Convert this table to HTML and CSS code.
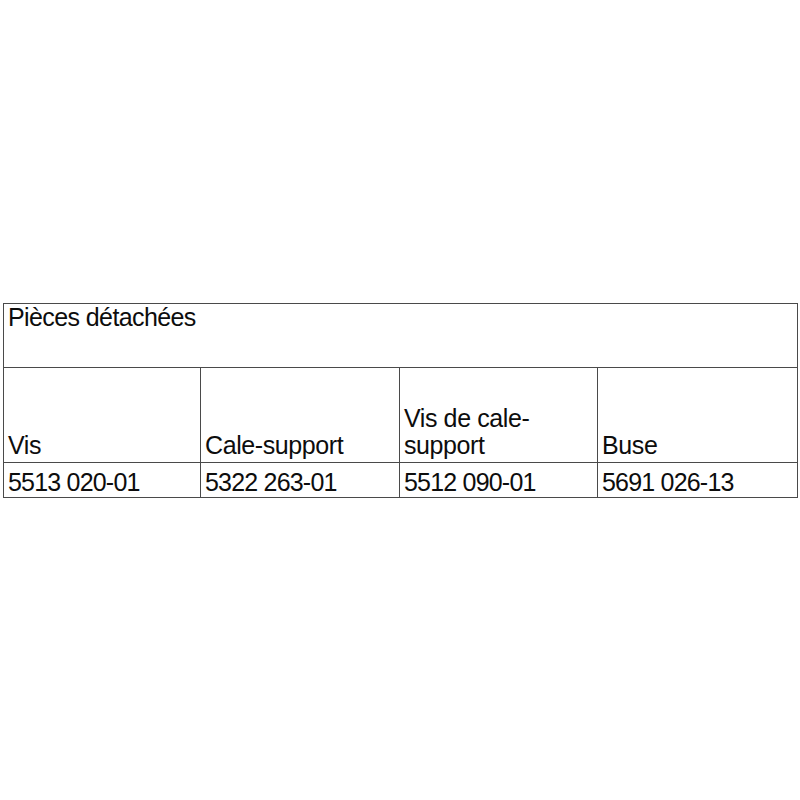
FILE: index.html
```html
<!DOCTYPE html>
<html lang="fr">
<head>
<meta charset="utf-8">
<title>Pièces détachées</title>
<link rel="stylesheet" href="styles.css">
</head>
<body>
<div class="page">
  <table class="parts">
    <colgroup>
      <col class="c1"><col class="c2"><col class="c3"><col class="c4">
    </colgroup>
    <tr class="title-row">
      <td colspan="4">Pièces détachées</td>
    </tr>
    <tr class="head-row">
      <td>Vis</td>
      <td>Cale-support</td>
      <td>Vis de cale-<br>support</td>
      <td>Buse</td>
    </tr>
    <tr class="data-row">
      <td>5513 020-01</td>
      <td>5322 263-01</td>
      <td>5512 090-01</td>
      <td>5691 026-13</td>
    </tr>
  </table>
</div>
</body>
</html>
```

FILE: styles.css
```css
html, body {
  margin: 0;
  padding: 0;
  background: #ffffff;
}

.page {
  padding: 303px 3px 0 3px;
}

.parts {
  width: 794px;
  border-collapse: collapse;
  table-layout: fixed;
  font-family: "Liberation Sans", Arial, sans-serif;
  font-size: 25px;
  line-height: 26px;
  color: #0d0d0d;
}

.c1 { width: 197px; }
.c2 { width: 199px; }
.c3 { width: 198px; }
.c4 { width: 200px; }

.parts td {
  border: 1px solid #4a4a4a;
  padding: 0 4px;
  white-space: nowrap;
}

.title-row td {
  height: 63px;
  vertical-align: top;
  padding-top: 0;
  letter-spacing: -0.6px;
}

.head-row td {
  height: 95px;
  vertical-align: bottom;
  padding-bottom: 3px;
  line-height: 27px;
  letter-spacing: -0.4px;
  box-sizing: border-box;
}

.data-row td {
  height: 35px;
  vertical-align: bottom;
  padding-bottom: 2px;
  letter-spacing: -0.8px;
  box-sizing: border-box;
}
```
